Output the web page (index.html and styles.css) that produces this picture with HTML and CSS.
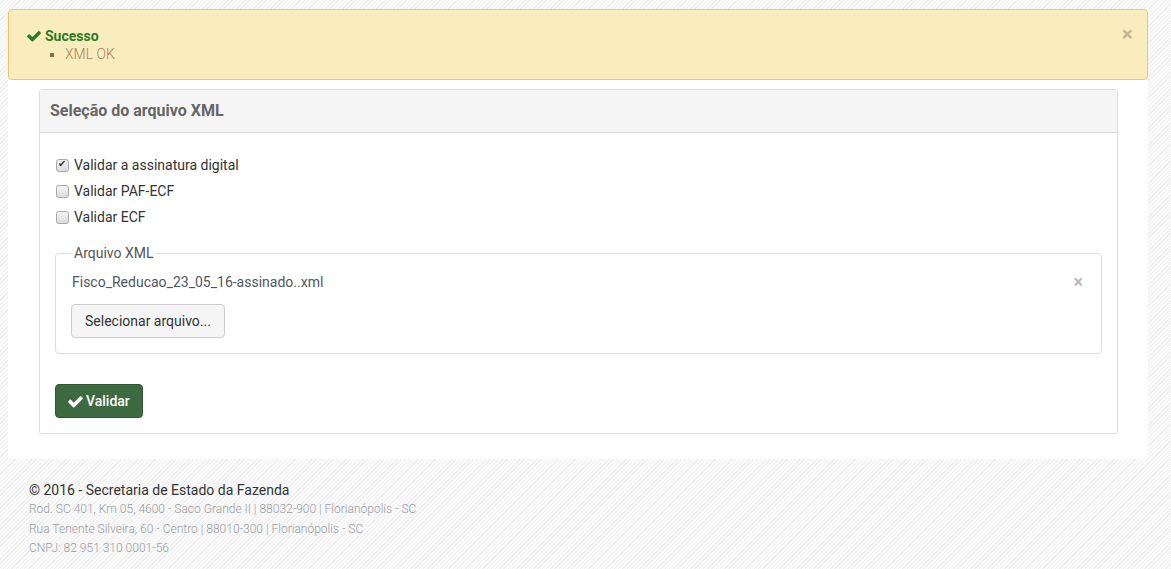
FILE: index.html
```html
<!DOCTYPE html>
<html>
<head>
    <meta charset="UTF-8">
    <title>Validador XML</title>
    <link rel="stylesheet" href="styles.css">
</head>
<body>
    <div class="wrapper">
        <div class="alert">
            <span class="alert-close">&times;</span>
            <div class="alert-title">
                <svg class="icon-check" viewBox="0 0 1792 1792"><path d="M1671 566q0 40-28 68l-724 724-136 136q-28 28-68 28t-68-28l-136-136-362-362q-28-28-28-68t28-68l136-136q28-28 68-28t68 28l294 295 656-657q28-28 68-28t68 28l136 136q28 28 28 68z"/></svg>
                Sucesso
            </div>
            <ul class="alert-list">
                <li>XML OK</li>
            </ul>
        </div>

        <div class="panel">
            <div class="panel-heading">Seleção do arquivo XML</div>
            <div class="panel-body">
                <label class="check-row"><input type="checkbox" checked> Validar a assinatura digital</label>
                <label class="check-row"><input type="checkbox"> Validar PAF-ECF</label>
                <label class="check-row"><input type="checkbox"> Validar ECF</label>

                <fieldset class="file-box">
                    <legend>Arquivo XML</legend>
                    <div class="file-name">
                        <span>Fisco_Reducao_23_05_16-assinado..xml</span>
                        <span class="file-remove">&times;</span>
                    </div>
                    <button class="btn btn-default">Selecionar arquivo...</button>
                </fieldset>

                <button class="btn btn-success">
                    <svg class="icon-check" viewBox="0 0 1792 1792"><path d="M1671 566q0 40-28 68l-724 724-136 136q-28 28-68 28t-68-28l-136-136-362-362q-28-28-28-68t28-68l136-136q28-28 68-28t68 28l294 295 656-657q28-28 68-28t68 28l136 136q28 28 28 68z"/></svg>
                    Validar
                </button>
            </div>
        </div>
    </div>

    <div class="footer">
        <div class="footer-title">© 2016 - Secretaria de Estado da Fazenda</div>
        <div class="footer-line">Rod. SC 401, Km 05, 4600 - Saco Grande II | 88032-900 | Florianópolis - SC</div>
        <div class="footer-line">Rua Tenente Silveira, 60 - Centro | 88010-300 | Florianópolis - SC</div>
        <div class="footer-line">CNPJ: 82 951 310 0001-56</div>
    </div>
</body>
</html>
```

FILE: styles.css
```css
body {
    margin: 0;
    font-family: Roboto, "Liberation Sans", sans-serif;
    font-size: 14px;
    color: #333;
    background-color: #fafafa;
    background-image: repeating-linear-gradient(135deg, #fafafa 0, #fafafa 2px, #efefef 2px, #efefef 3px);
}

.wrapper {
    width: 1140px;
    margin: 9px 0 0 8px;
    background: #fff;
    padding-bottom: 25px;
}

.alert {
    position: relative;
    box-sizing: border-box;
    height: 71px;
    padding: 17px 24px 0 17px;
    background: #f9edbe;
    border: 1px solid #f0c36d;
    border-radius: 4px;
}

.alert-close {
    position: absolute;
    right: 14px;
    top: 14px;
    font-size: 21px;
    font-weight: bold;
    line-height: 21px;
    color: #c2b892;
}

.alert-title {
    display: flex;
    align-items: center;
    font-weight: bold;
    color: #2f7a25;
    line-height: 18px;
}

.alert-title .icon-check {
    width: 16px;
    height: 16px;
    margin-right: 3px;
    fill: #2f7a25;
}

.alert-list {
    margin: 0;
    padding-left: 39px;
    list-style: square;
    line-height: 18px;
}

.alert-list li {
    color: #a9805a;
    font-weight: 300;
}

.alert-list li::marker {
    color: #8a6d3b;
}

.panel {
    margin: 9px 30px 0 31px;
    border: 1px solid #ddd;
    border-radius: 3px;
}

.panel-heading {
    height: 42px;
    line-height: 42px;
    padding: 0 10px;
    background: #f5f5f5;
    border-bottom: 1px solid #ddd;
    font-size: 16px;
    font-weight: bold;
    color: #666;
}

.panel-body {
    padding: 22px 15px 15px;
}

.check-row {
    display: flex;
    align-items: center;
    height: 20px;
    margin-bottom: 6px;
}

.check-row input {
    appearance: none;
    -webkit-appearance: none;
    position: relative;
    width: 13px;
    height: 13px;
    margin: 0 5px 0 1px;
    border: 1px solid #a9a9a9;
    border-radius: 3px;
    background: linear-gradient(#f4f4f4, #dcdcdc);
    box-sizing: border-box;
}

.check-row input:checked::after {
    content: "\2714";
    position: absolute;
    left: 1px;
    top: -2px;
    font-size: 10px;
    color: #333;
    font-family: "DejaVu Sans", sans-serif;
}

.file-box {
    margin: 16px 0 0;
    padding: 0 16px 15px;
    border: 1px solid #ddd;
    border-radius: 4px;
}

.file-box legend {
    padding: 0 2px;
    color: #555;
    line-height: 20px;
}

.file-name {
    display: flex;
    justify-content: space-between;
    align-items: center;
    margin-top: 9px;
    line-height: 20px;
    color: #4e5761;
}

.file-remove {
    font-size: 18px;
    font-weight: bold;
    color: #bbb;
    margin-right: 2px;
}

.btn {
    display: inline-flex;
    align-items: center;
    height: 34px;
    padding: 0 12px;
    font-family: inherit;
    font-size: 14px;
    border-radius: 4px;
    cursor: pointer;
}

.btn-default {
    margin-top: 12px;
    margin-left: -1px;
    padding: 0 13px;
    background: #f5f5f5;
    border: 1px solid #ccc;
    color: #333;
}

.btn-success {
    margin-top: 30px;
    padding: 0 12px 0 11px;
    background: #3d6a41;
    border: 1px solid #2f5633;
    color: #fff;
    font-weight: 500;
}

.btn-success .icon-check {
    width: 17px;
    height: 17px;
    margin-right: 2px;
    fill: #fff;
}

.footer {
    padding: 21px 29px;
}

.footer-title {
    line-height: 20px;
    color: #333;
}

.footer-line {
    font-size: 12px;
    font-weight: 300;
    line-height: 19.5px;
    color: #999da3;
}
```
